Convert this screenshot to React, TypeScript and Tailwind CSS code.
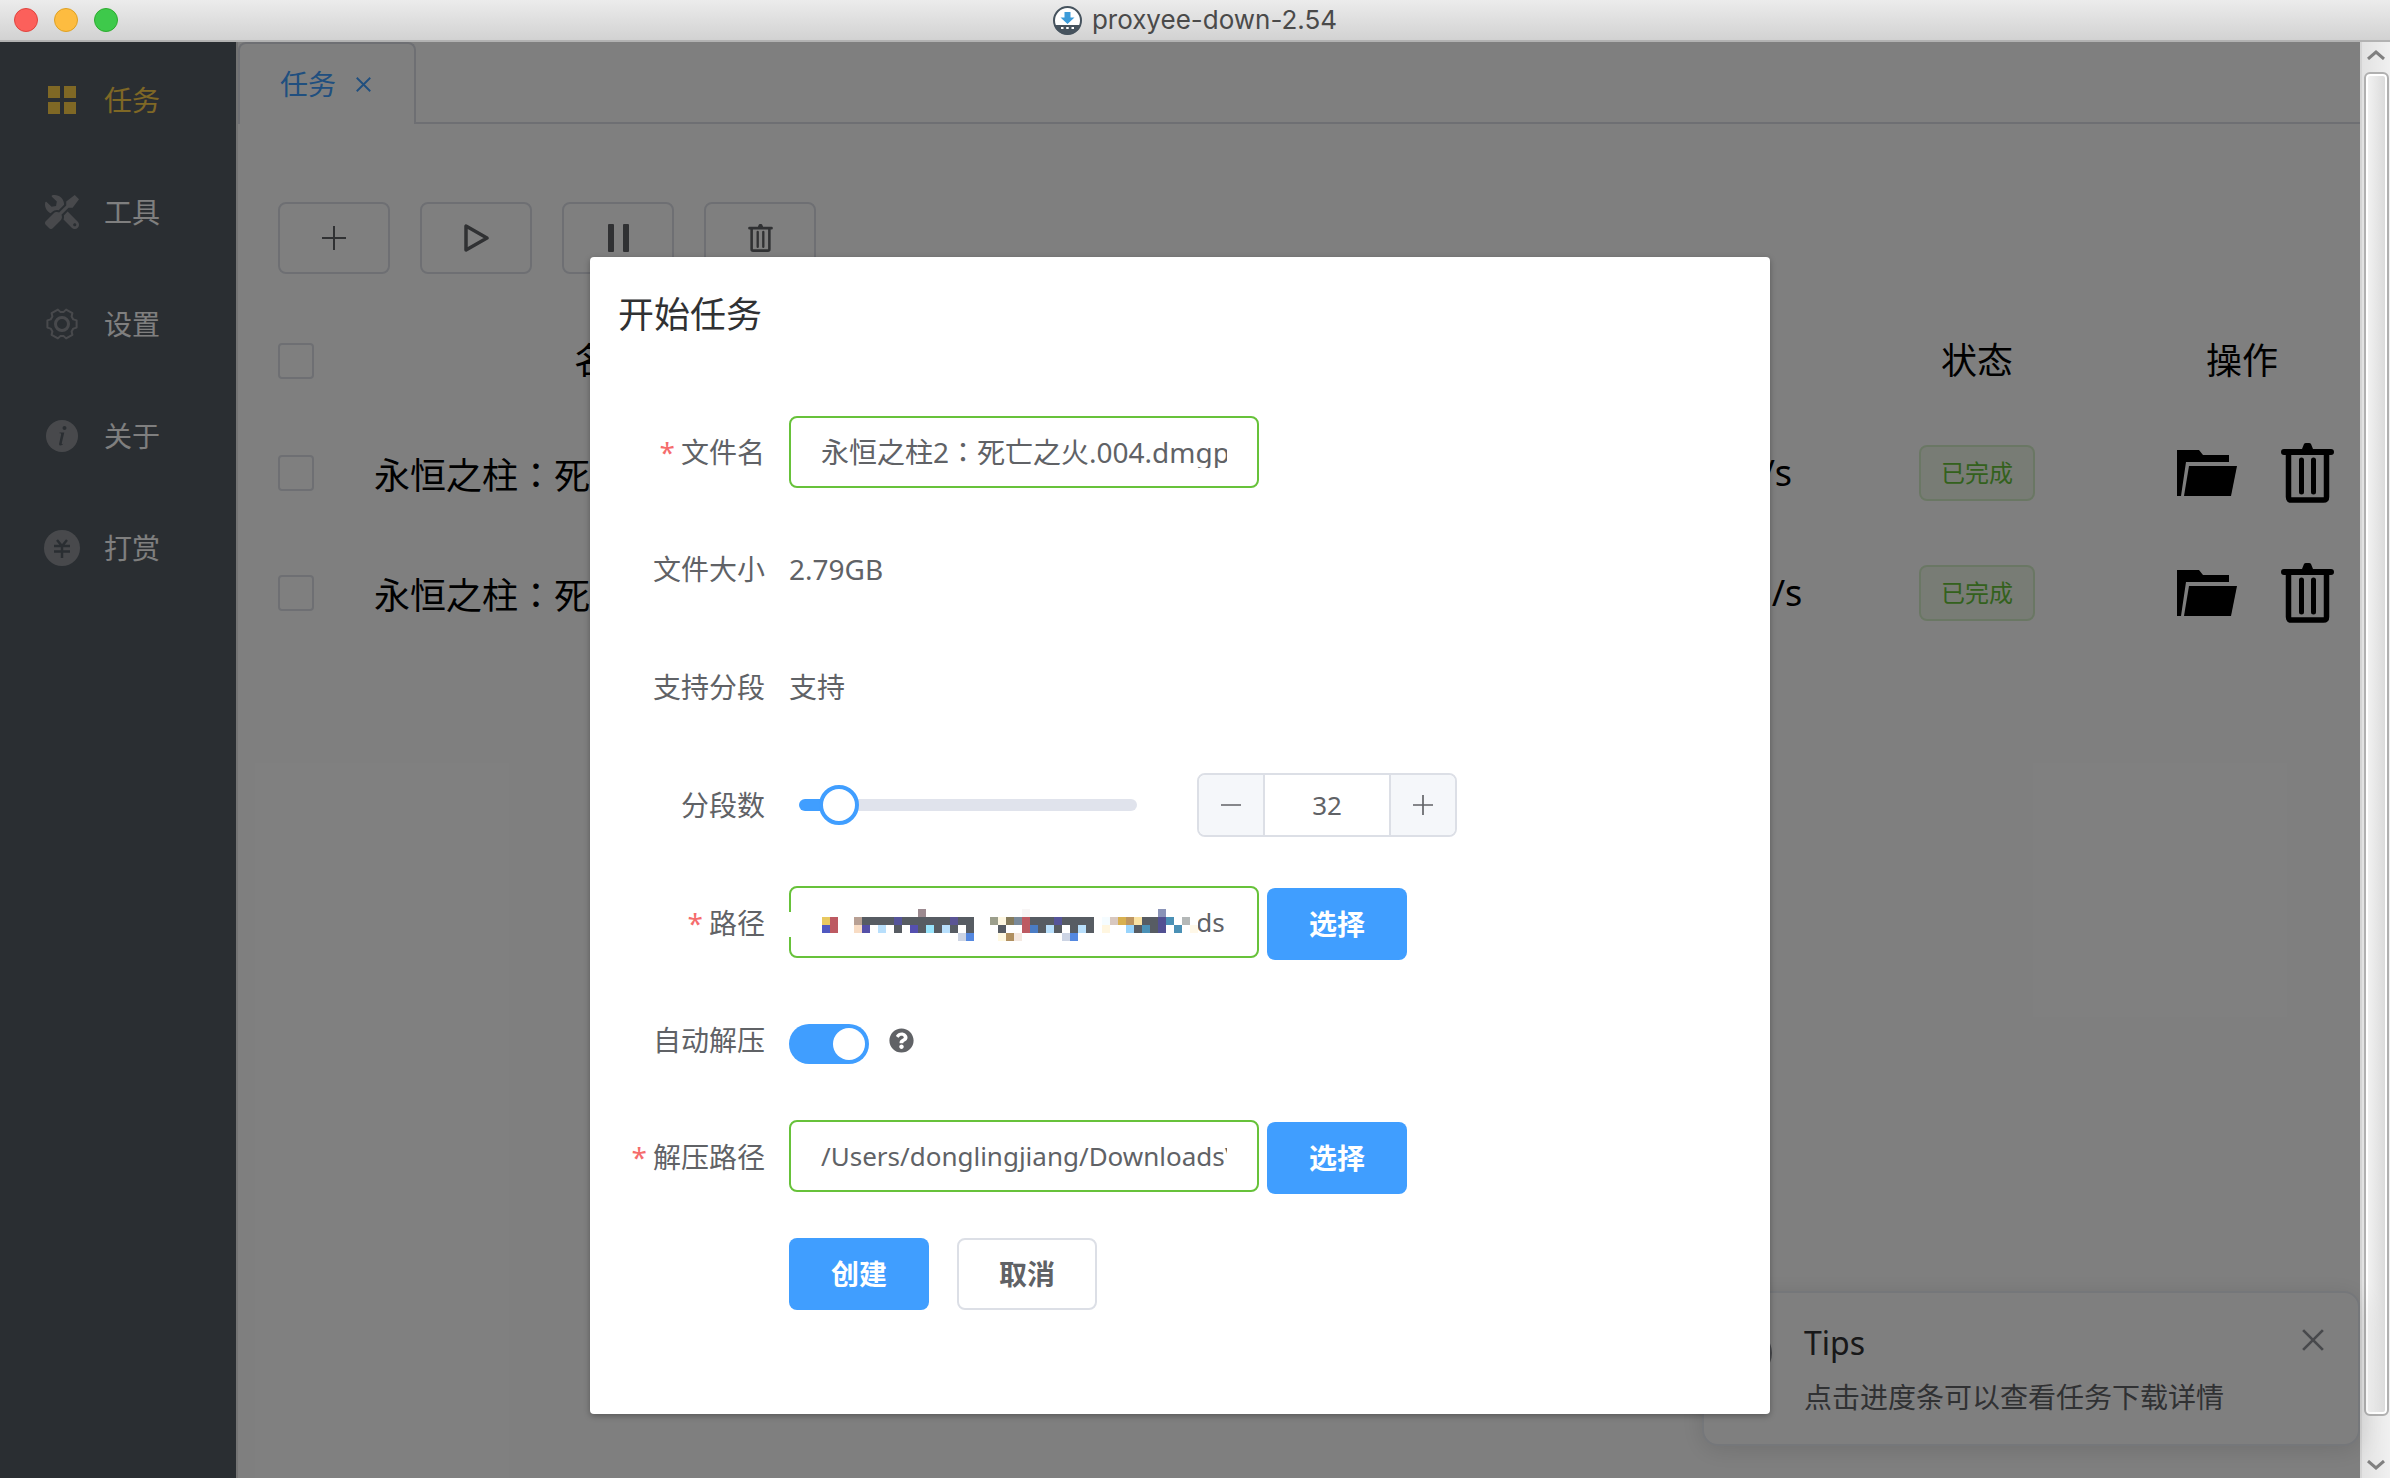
import React, { useState } from 'react';
import { FaTools, FaQuestionCircle } from 'react-icons/fa';

type IconProps = { className?: string };

const AppLogo = () => (
  <svg viewBox="0 0 29 29" className="size-[29px]" aria-hidden="true">
    <circle cx="14.5" cy="14.5" r="13.5" fill="#fff" stroke="#46535e" strokeWidth="2" />
    <path d="M1.5 19h26a13.5 13.5 0 0 1-26 0z" fill="#46535e" />
    <path d="M11.5 6h6v5.500h4L14.500 18 7.500 11.500h4z" fill="#3c9bd9" />
    <path d="M8 21h2.500v2H8zM13.200 21h2.500v2h-2.500zM18.500 21H21v2h-2.500z" fill="#fff" />
  </svg>
);

const MenuGrid = ({ className }: IconProps) => (
  <svg viewBox="0 0 28 28" className={className} fill="currentColor" aria-hidden="true">
    <path d="M0 0h12v12H0zM16 0h12v12H16zM0 16h12v12H0zM16 16h12v12H16z" />
  </svg>
);

const Gear = ({ className }: IconProps) => (
  <svg viewBox="0 0 32 32" className={className} fill="none" stroke="currentColor" strokeWidth="2" strokeLinejoin="round" aria-hidden="true">
    <path d="M27.300 11.400 30.600 12.400V19.600L27.300 20.600 25.600 23.500 26.400 26.800 20.100 30.400 17.700 28.100H14.300L11.900 30.400 5.600 26.800 6.400 23.500 4.700 20.600 1.400 19.600V12.400L4.700 11.400 6.400 8.500 5.600 5.200 11.900 1.600 14.300 3.900H17.700L20.100 1.600 26.400 5.200 25.600 8.500z" />
    <circle cx="16" cy="16" r="6.500" strokeWidth="3" />
  </svg>
);

const Info = ({ className }: IconProps) => (
  <svg viewBox="0 0 32 32" className={className} aria-hidden="true">
    <circle cx="16" cy="16" r="16" fill="currentColor" />
    <circle cx="18.500" cy="8" r="2" fill="#545c64" />
    <path d="M13.500 12.500h4.800l-2.500 10.500c-.3 1.400.6 1.200 1.700.5-1.200 2.200-4.800 3-4.400.2l2-9.200c.2-1-.4-1.200-1.600-1.200z" fill="#545c64" />
  </svg>
);

const Yen = ({ className }: IconProps) => (
  <svg viewBox="0 0 36 36" className={className} aria-hidden="true">
    <circle cx="18" cy="18" r="18" fill="currentColor" />
    <path d="M13 10l5 6 5-6M10 16h16M10 21.500h16M18 16v12" fill="none" stroke="#545c64" strokeWidth="2.500" />
  </svg>
);

const Plus = ({ className }: IconProps) => (
  <svg viewBox="0 0 24 24" className={className} fill="none" stroke="currentColor" strokeWidth="2" aria-hidden="true">
    <path d="M12 0v24M0 12h24" />
  </svg>
);

const Minus = ({ className }: IconProps) => (
  <svg viewBox="0 0 24 24" className={className} fill="none" stroke="currentColor" strokeWidth="2" aria-hidden="true">
    <path d="M0 12h24" />
  </svg>
);

const Cross = ({ className }: IconProps) => (
  <svg viewBox="0 0 20 20" className={className} fill="none" stroke="currentColor" strokeWidth="2.500" aria-hidden="true">
    <path d="M1 1l18 18M19 1L1 19" />
  </svg>
);

const Play = ({ className }: IconProps) => (
  <svg viewBox="0 0 25 28" className={className} fill="none" stroke="currentColor" strokeWidth="3.500" strokeLinejoin="round" aria-hidden="true">
    <path d="M2 2v24l21-12z" />
  </svg>
);

const Pause = ({ className }: IconProps) => (
  <svg viewBox="0 0 21 28" className={className} fill="currentColor" aria-hidden="true">
    <rect width="6" height="28" rx="1" />
    <rect x="15" width="6" height="28" rx="1" />
  </svg>
);

const Trash = ({ className }: IconProps) => (
  <svg viewBox="0 0 53 60" className={className} aria-hidden="true">
    <path d="M21 6l2-5q.5-1 2-1h3q1.500 0 2 1l2 5h18q3 0 3 3t-3 3H3Q0 12 0 9t3-3z" fill="currentColor" />
    <path d="M7.500 10v44q0 3 3 3h32q3 0 3-3V10" fill="none" stroke="currentColor" strokeWidth="5.500" />
    <path d="M20.500 17v32M32.500 17v32" stroke="currentColor" strokeWidth="5" strokeLinecap="round" />
  </svg>
);

const Folder = ({ className }: IconProps) => (
  <svg viewBox="0 0 60 46" className={className} fill="currentColor" aria-hidden="true">
    <path d="M0 0h22l4 5h26v7H9L4 46H0z" />
    <path d="M12 16h48l-6 30H7z" />
  </svg>
);

const menu = [
  { label: '任务', icon: <MenuGrid className="size-7" />, active: true },
  { label: '工具', icon: <FaTools className="size-[34px] -scale-x-100" /> },
  { label: '设置', icon: <Gear className="size-8" /> },
  { label: '关于', icon: <Info className="size-8" /> },
  { label: '打赏', icon: <Yen className="size-9" /> },
];

const tasks = [
  { id: 1, name: '永恒之柱：死亡之火', speed: '8.36MB/s' },
  { id: 2, name: '永恒之柱：死亡之火', speed: '12.36MB/s' },
];

// Censored part of the path: [row, column, colour, cell count], 8px cells
const D = '#575c63';
const mosaic: [number, number, string, number?][] = [
  [0, 12, '#9c8a90'], [0, 25, '#f8f6f6'], [0, 42, '#8a93b8'],
  [1, 0, '#e8c860'], [1, 1, '#bd5a62'], [1, 4, '#b8a094'], [1, 5, D, 4], [1, 9, '#55549a'], [1, 10, D, 6],
  [1, 16, '#5a5494'], [1, 17, D, 2], [1, 21, '#9c9f8c'], [1, 22, '#fdf6e0'], [1, 23, '#857b5c'], [1, 24, '#7a8a9a'],
  [1, 25, '#bd5a62'], [1, 26, D, 3], [1, 29, '#55549a'], [1, 30, D, 4], [1, 35, '#f5fcff'], [1, 36, '#d8c8c0'],
  [1, 37, '#d8b050'], [1, 38, '#bd9560'], [1, 39, '#fbe3a4'], [1, 40, D, 2], [1, 42, '#525092'], [1, 43, '#4a90b5'], [1, 45, '#b4b8b8'],
  [2, 0, '#5058c0'], [2, 1, '#bd5a62'], [2, 4, '#f8dcc4'], [2, 5, '#5550a8'], [2, 7, '#b8dffc'], [2, 9, D],
  [2, 11, '#5550b0'], [2, 12, D], [2, 13, '#98e4fc'], [2, 14, D], [2, 15, '#b8dffc'], [2, 16, D], [2, 18, D],
  [2, 22, D], [2, 25, '#bd5a62'], [2, 26, '#4a7cc4'], [2, 27, D], [2, 28, '#b8dffc'], [2, 29, D], [2, 31, D],
  [2, 32, '#b8dffc'], [2, 33, D], [2, 35, '#fff6e0'], [2, 38, '#98d4fc'], [2, 39, D], [2, 40, '#4a90b5'],
  [2, 41, D], [2, 42, '#525092'], [2, 44, '#4a90b5'], [2, 46, '#fff8e8'],
  [3, 17, '#ccd4e4'], [3, 18, '#5488e0'], [3, 22, '#fff8e0'], [3, 23, '#b09060'], [3, 24, '#f4e8e0'],
  [3, 30, '#ccd4e4'], [3, 31, '#5488e0'],
];

const checkClass = 'block size-9 appearance-none rounded-[4px] border-2 border-[#dcdfe6] checked:bg-[#409eff]';
const toolClass = 'flex h-[72px] w-28 items-center justify-center rounded-lg border-2 border-[#dcdfe6] text-[#606266]';
const boxClass = 'flex h-[72px] w-[470px] items-center rounded-lg border-2 border-[#67c23a] px-[30px]';
const inputClass = 'h-8 w-full bg-transparent leading-8 text-[#606266] outline-none';
const primaryClass = 'h-[72px] w-[140px] rounded-lg bg-[#409eff] text-[28px] font-semibold text-white';

function Row({ label, htmlFor, required, className = 'h-[74px]', children }: {
  label: string; htmlFor?: string; required?: boolean; className?: string; children: React.ReactNode;
}) {
  return (
    <div className={`flex items-center ${className}`}>
      <label htmlFor={htmlFor} className="mr-6 flex w-[147px] shrink-0 justify-end gap-1.5 whitespace-nowrap">
        {required && <span className="text-[#f56c6c]">*</span>}
        {label}
      </label>
      {children}
    </div>
  );
}

export default function App() {
  const [fileName, setFileName] = useState('永恒之柱2：死亡之火.004.dmgpart');
  const [path, setPath] = useState('/Users/donglingjiang/Downloads');
  const [unzipPath, setUnzipPath] = useState('/Users/donglingjiang/Downloads\\永恒之柱2');
  const [unzip, setUnzip] = useState(true);
  const [connections, setConnections] = useState(32);

  const min = 16;
  const max = 256;
  const percent = ((connections - min) / (max - min)) * 88 + 6;

  return (
    <div className="flex h-screen flex-col overflow-hidden font-['Noto_Sans','Noto_Sans_CJK_SC',sans-serif] text-black">
      {/* Title bar */}
      <header className="relative flex h-[42px] shrink-0 items-center justify-center gap-[10px] border-b-2 border-[#b2b2b2] bg-linear-to-b from-[#ececec] to-[#d2d2d2]">
        <div className="absolute left-[14px] top-2 flex gap-4">
          <button aria-label="关闭窗口" className="size-6 rounded-full border border-[#e0443e] bg-[#fc605b]" />
          <button aria-label="最小化" className="size-6 rounded-full border border-[#dea123] bg-[#fdbc40]" />
          <button aria-label="最大化" className="size-6 rounded-full border border-[#2dac2f] bg-[#3ec94b]" />
        </div>
        <AppLogo />
        <h1 className="font-['Inter',sans-serif] text-[26px] leading-8 text-[#4a4a4a]">proxyee-down-2.54</h1>
      </header>

      <div className="flex min-h-0 flex-1">
        <div className="relative flex min-w-0 flex-1 bg-white">
          {/* Sidebar */}
          <nav className="w-[236px] shrink-0 bg-[#545c64] pt-0.5">
            {menu.map((item) => (
              <a
                key={item.label}
                href="#"
                className={`flex h-28 items-center gap-[18px] pl-[38px] text-[28px] ${item.active ? 'text-[#ffd04b]' : 'text-white'}`}
              >
                <span className={`flex w-12 justify-center ${item.active ? '' : 'text-[#909399]'}`}>{item.icon}</span>
                {item.label}
              </a>
            ))}
          </nav>

          <main className="min-w-0 flex-1 border-l-2 border-[#e6e6e6]">
            {/* Tabs */}
            <div className="flex h-[82px]">
              <div className="flex w-[178px] items-center gap-5 rounded-t-lg border-2 border-b-0 border-[#dcdfe6] pl-10 text-[28px] text-[#409eff]">
                任务
                <button aria-label="关闭标签"><Cross className="size-[15px]" /></button>
              </div>
              <div className="flex-1 border-b-2 border-[#dcdfe6]" />
            </div>

            <div className="pl-10 pt-[78px]">
              <div className="flex gap-[30px]">
                <button className={toolClass} aria-label="新建"><Plus className="size-6" /></button>
                <button className={toolClass} aria-label="开始"><Play className="h-7 w-[25px]" /></button>
                <button className={toolClass} aria-label="暂停"><Pause className="h-7 w-[21px]" /></button>
                <button className={toolClass} aria-label="删除"><Trash className="h-7 w-[25px]" /></button>
              </div>

              <table className="mt-[34px] w-full table-fixed text-[36px] leading-[48px]">
                <colgroup>
                  <col className="w-24" />
                  <col className="w-[472px]" />
                  <col />
                  <col className="w-[182px]" />
                  <col className="w-[346px]" />
                  <col className="w-[184px]" />
                  <col className="w-[26px]" />
                </colgroup>
                <thead>
                  <tr className="h-[105px]">
                    <th><input type="checkbox" aria-label="全选" className={checkClass} /></th>
                    <th className="font-normal">名称</th>
                    <th className="font-normal">进度</th>
                    <th className="font-normal">速度</th>
                    <th className="font-normal">状态</th>
                    <th className="font-normal">操作</th>
                    <th />
                  </tr>
                </thead>
                <tbody>
                  {tasks.map((task) => (
                    <tr key={task.id} className="h-[120px]">
                      <td><input type="checkbox" aria-label={task.name} className={checkClass} /></td>
                      <td className="font-['Noto_Sans_CJK_JP',sans-serif]">{task.name}</td>
                      <td className="text-center">100%</td>
                      <td className="text-center">{task.speed}</td>
                      <td>
                        <div className="flex justify-center">
                          <span className="flex h-14 w-[116px] items-center justify-center rounded-lg border-2 border-[#67c23a]/20 bg-[#67c23a]/10 text-2xl text-[#67c23a]">
                            已完成
                          </span>
                        </div>
                      </td>
                      <td>
                        <div className="flex items-center justify-end gap-11">
                          <button aria-label="打开文件夹"><Folder className="h-[46px] w-[60px]" /></button>
                          <button aria-label="删除任务"><Trash className="h-[60px] w-[53px]" /></button>
                        </div>
                      </td>
                      <td />
                    </tr>
                  ))}
                </tbody>
              </table>
            </div>
          </main>

          {/* Notification */}
          <aside className="absolute bottom-8 right-0 flex h-[155px] w-[658px] items-start rounded-2xl border-2 border-[#ebeef5] bg-white pl-5 pr-[34px] pt-7 shadow-[0_4px_24px_rgba(0,0,0,0.12)]">
            <Info className="mt-2 size-12 text-[#909399]" />
            <div className="ml-8 flex-1">
              <h2 className="text-[32px] leading-[44px] text-[#303133]">Tips</h2>
              <p className="mt-3 text-[28px] leading-10 text-[#606266]">点击进度条可以查看任务下载详情</p>
            </div>
            <button aria-label="关闭提示" className="mt-2 text-[#909399]"><Cross className="size-[22px]" /></button>
          </aside>

          {/* Dialog */}
          <div className="absolute inset-0 flex items-start justify-center bg-black/50 pt-[215px]">
            <section role="dialog" aria-label="开始任务" className="w-1/2 rounded-[4px] bg-white px-7 pb-[104px] pt-[34px] shadow-[0_2px_6px_rgba(0,0,0,0.3)]">
              <h2 className="text-[36px] leading-[48px] text-[#303133]">开始任务</h2>

              <form className="mt-[77px] flex flex-col gap-11 text-[28px] leading-10 text-[#606266]" onSubmit={(e) => e.preventDefault()}>
                <Row label="文件名" htmlFor="fileName" required className="h-[72px]">
                  <div className={boxClass}>
                    <input
                      id="fileName"
                      className={`${inputClass} font-['Noto_Sans','Noto_Sans_CJK_JP',sans-serif] text-[28px]`}
                      value={fileName}
                      onChange={(e) => setFileName(e.target.value)}
                    />
                  </div>
                </Row>
                <Row label="文件大小"><span>2.79GB</span></Row>
                <Row label="支持分段"><span>支持</span></Row>
                <Row label="分段数" htmlFor="connections">
                  <input
                    id="connections"
                    type="range"
                    min={min}
                    max={max}
                    value={connections}
                    onChange={(e) => setConnections(Number(e.target.value))}
                    className="ml-[10px] h-3 w-[338px] appearance-none rounded-md [&::-webkit-slider-thumb]:size-10 [&::-webkit-slider-thumb]:appearance-none [&::-webkit-slider-thumb]:rounded-full [&::-webkit-slider-thumb]:border-4 [&::-webkit-slider-thumb]:border-[#409eff] [&::-webkit-slider-thumb]:bg-white"
                    style={{ background: `linear-gradient(to right, #409eff ${percent}%, #e0e3ec ${percent}%)` }}
                  />
                  <div className="ml-[60px] flex h-16 w-[260px] overflow-hidden rounded-lg border-2 border-[#dcdfe6]">
                    <button type="button" aria-label="减少" onClick={() => setConnections(connections - 1)} className="flex w-16 items-center justify-center bg-[#f5f7fa]">
                      <Minus className="size-5" />
                    </button>
                    <input
                      aria-label="分段数值"
                      value={connections}
                      onChange={(e) => setConnections(Number(e.target.value))}
                      className="min-w-0 flex-1 border-x-2 border-[#dcdfe6] text-center text-[26px] outline-none"
                    />
                    <button type="button" aria-label="增加" onClick={() => setConnections(connections + 1)} className="flex w-16 items-center justify-center bg-[#f5f7fa]">
                      <Plus className="size-5" />
                    </button>
                  </div>
                </Row>
                <Row label="路径" htmlFor="path" required>
                  <div className={`${boxClass} relative self-start`}>
                    <input id="path" className={`${inputClass} text-[26px]`} value={path} onChange={(e) => setPath(e.target.value)} />
                    <svg viewBox="0 0 412 50" className="absolute -left-1 top-[9px] h-[50px] w-[412px]" shapeRendering="crispEdges" aria-hidden="true">
                      <rect y="15" width="40" height="25" fill="#fff" />
                      <rect x="20" width="391" height="50" fill="#fff" />
                      {mosaic.map(([row, col, color, count = 1]) => (
                        <rect key={`${row}-${col}`} x={35 + col * 8} y={12 + row * 8} width={count * 8} height="8" fill={color} />
                      ))}
                    </svg>
                  </div>
                  <button type="button" className={`${primaryClass} ml-2 self-end`}>选择</button>
                </Row>
                <Row label="自动解压" htmlFor="unzip" className="h-[72px]">
                  <input
                    id="unzip"
                    type="checkbox"
                    role="switch"
                    checked={unzip}
                    onChange={(e) => setUnzip(e.target.checked)}
                    className="mt-2 flex h-10 w-20 appearance-none items-center rounded-full bg-[#c0ccda] px-1 before:size-8 before:rounded-full before:bg-white checked:justify-end checked:bg-[#409eff]"
                  />
                  <FaQuestionCircle className="ml-5 size-[25px]" />
                </Row>
                <Row label="解压路径" htmlFor="unzipPath" required>
                  <div className={`${boxClass} self-start`}>
                    <input id="unzipPath" className={`${inputClass} text-[26px]`} value={unzipPath} onChange={(e) => setUnzipPath(e.target.value)} />
                  </div>
                  <button type="button" className={`${primaryClass} ml-2 self-end`}>选择</button>
                </Row>
                <div className="flex gap-7 pl-[171px]">
                  <button type="submit" className={primaryClass}>创建</button>
                  <button type="button" className="h-[72px] w-[140px] rounded-lg border-2 border-[#dcdfe6] text-[28px] font-semibold">取消</button>
                </div>
              </form>
            </section>
          </div>
        </div>

        {/* Scrollbar */}
        <div className="flex w-[30px] shrink-0 flex-col items-center border-l-2 border-[#d4d4d4] bg-linear-to-r from-[#e2e2e2] to-[#f0f0f0]" aria-hidden="true">
          <svg viewBox="0 0 18 10" className="mb-3 mt-2 h-[10px] w-[18px] shrink-0" fill="none" stroke="#808080" strokeWidth="3">
            <path d="M1 9l8-7 8 7" />
          </svg>
          <div className="mb-11 w-[25px] flex-1 rounded-md border-2 border-[#b0b0b0] bg-linear-to-r from-[#f4f4f4] to-[#d9d9d9] shadow-[inset_0_0_0_2px_#fff]" />
          <svg viewBox="0 0 18 10" className="mb-2 h-[10px] w-[18px] shrink-0" fill="none" stroke="#808080" strokeWidth="3">
            <path d="M1 1l8 7 8-7" />
          </svg>
        </div>
      </div>
    </div>
  );
}
